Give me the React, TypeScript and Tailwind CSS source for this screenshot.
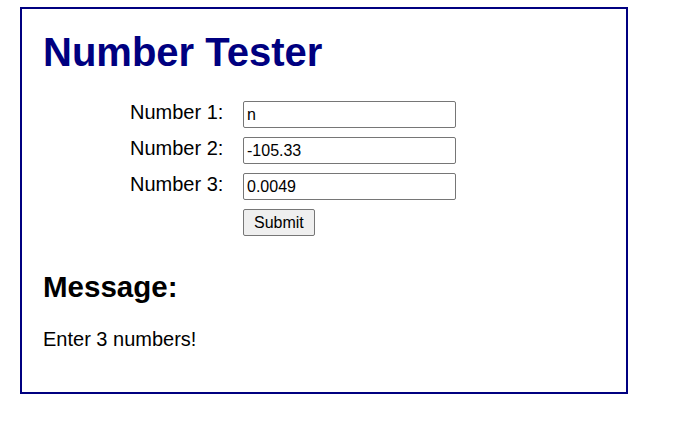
import React from "react";

export default function App() {
  const rows = [
    { label: "Number 1:", value: "n" },
    { label: "Number 2:", value: "-105.33" },
    { label: "Number 3:", value: "0.0049" },
  ];
  return (
    <div className="bg-white w-[675px] h-[437px] overflow-hidden pt-[7px] pl-[20px]" style={{ fontFamily: '"Liberation Sans", Arial, sans-serif' }}>
      <div className="w-[608px] h-[387px] border-2 border-[#000080] pl-[21px] pt-[20px]">
        <h1 className="text-[40px] leading-[46px] font-bold text-[#000080]">Number Tester</h1>
        <div className="mt-[26px] flex flex-col gap-[9px] pl-[87px]">
          {rows.map((r) => (
            <div key={r.label} className="flex items-start">
              <div className="w-[113px] text-[20px] leading-[23px] text-black">{r.label}</div>
              <input
                readOnly
                value={r.value}
                className="w-[213px] h-[27px] border border-[#767676] rounded-[2px] pl-[3px] text-[16px] text-black bg-white outline-none"
              />
            </div>
          ))}
          <div className="flex">
            <div className="w-[113px]" />
            <button className="h-[27px] px-[10px] border border-[#767676] rounded-[2px] bg-[#efefef] text-[16px] text-black">Submit</button>
          </div>
        </div>
        <h2 className="mt-[34px] text-[29.5px] leading-[34px] font-bold text-black">Message:</h2>
        <p className="mt-[24px] text-[20px] leading-[23px] text-black">Enter 3 numbers!</p>
      </div>
    </div>
  );
}
